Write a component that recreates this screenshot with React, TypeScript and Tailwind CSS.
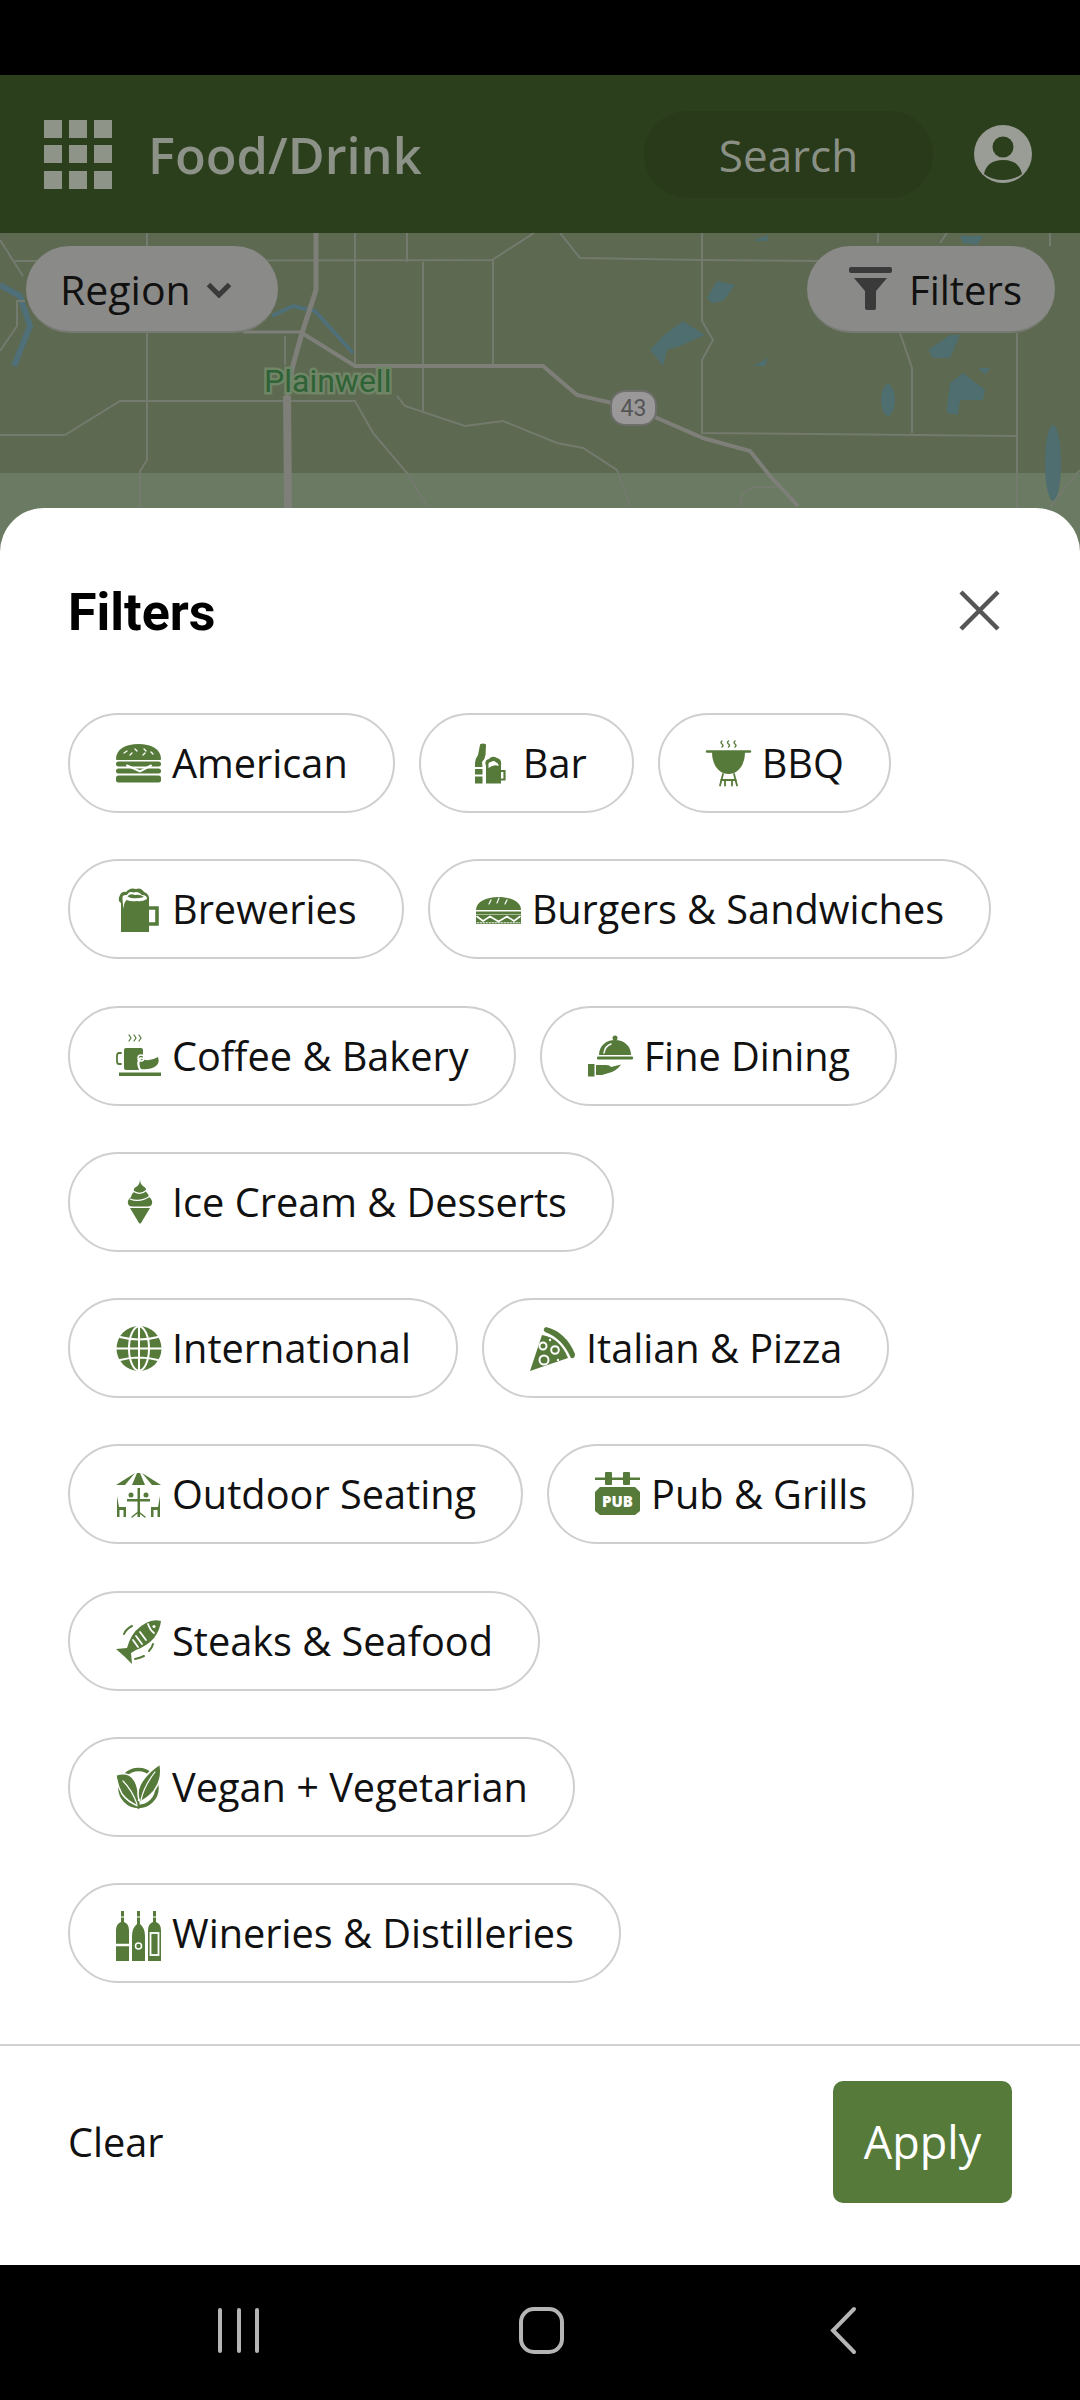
import type { ReactNode } from 'react'

const OPEN = "font-['Open_Sans',sans-serif]"

function Glyph({ children }: { children: ReactNode }) {
  return (
    <svg viewBox="0 0 45 45" className="h-[45px] w-[45px] shrink-0 overflow-visible fill-[#557a3a]">
      {children}
    </svg>
  )
}

const W = { stroke: '#fff', fill: 'none', strokeLinecap: 'round' as const }
const G = { stroke: '#557a3a', fill: 'none', strokeLinecap: 'round' as const }

const BurgerIcon = () => (
  <Glyph>
    <path d="M0 18C0 8 10 3 22.5 3S45 8 45 18Q45 19 44 19H1Q0 19 0 18Z" />
    <path d="M8 12l3-2M19 8l2 2M28 8l2 2M35 11l2 2M14 14l2-2M27 14l2-2" {...W} strokeWidth="1.3" />
    <rect y="20.5" width="45" height="5" rx="2.5" />
    <rect y="27.5" width="45" height="5" rx="2.5" />
    <path d="M11 24.5L24 30.5L35 24.5" {...W} strokeWidth="2" />
    <rect y="34.5" width="45" height="7" rx="2.5" />
  </Glyph>
)

const BarIcon = () => (
  <Glyph>
    <path d="M13 4Q13 2.5 16 2.5T19 4L18.5 14Q18 18 15 21L15.5 26H8V22Q8 18 11 14Z" />
    <rect x="8" y="28" width="7.5" height="5.5" />
    <rect x="8" y="35.5" width="7.5" height="7" />
    <path d="M19 25Q17 19 22 18Q25 14 30 17Q35 18 34 24V42.5H19Z" />
    <path d="M21.5 27V24Q21 21 24 21Q27 19 29 21.5Q31.5 22 31.5 24V25Q27 23 21.5 27Z" fill="#fff" />
    <path d="M34 30H37.5V38.5H34" {...G} strokeWidth="2.2" />
  </Glyph>
)

const GrillIcon = () => (
  <Glyph>
    <path d="M16 0q-2 1.5 0 3t0 3M22.5 0q-2 1.5 0 3t0 3M29 0q-2 1.5 0 3t0 3" {...G} strokeWidth="1.4" />
    <path d="M1 10.5H44" {...G} strokeWidth="2.4" />
    <path d="M6 11H39C39 24 32 33 22.5 33S6 24 6 11Z" />
    <path d="M17 33L14 44.5M28 33L31 44.5M15 39H30M19 39V44.5M26 39V44.5" {...G} strokeWidth="1.8" />
  </Glyph>
)

const MugIcon = () => (
  <Glyph>
    <path d="M5 45V16Q1 14 4 8Q6 4 10 5Q14 0 20 2Q25 0 28 5Q34 7 33 14V45Z" />
    <path d="M7.5 22Q8 14 11 13Q15 15 21 14Q26 15 31 12Q31 8 26 8Q22 4 18 5.5Q13 3.5 11 8Q6 7.5 6.5 11Q6.5 14 7.5 22Z" fill="#fff" />
    <path d="M11.5 9.5Q14 6 19 8Q24 7 28 10Q22 12 15 11Z" />
    <path d="M33 21H41V37H33" {...G} strokeWidth="3.6" />
  </Glyph>
)

const SubIcon = () => (
  <Glyph>
    <path d="M0 23C0 15 10 10 22.5 10S45 15 45 23Z" />
    <path d="M13 17l2-4M21 16l2-5M29 17l2-4" {...W} strokeWidth="1.2" />
    <rect y="24.5" width="45" height="3" />
    <path d="M0 28H45V37H0Z" />
    <path d="M1 29.5L7 34L14 29.5L22.5 34.5L31 29.5L38 34L44 29.5" {...W} strokeWidth="1.6" />
    <path d="M1 35.8H44" {...W} strokeWidth="1" strokeDasharray="1.5 1.5" />
  </Glyph>
)

const CoffeeIcon = () => (
  <Glyph>
    <path d="M13 2l2 3-2 3M18 2l2 3-2 3M23 2l2 3-2 3" {...G} strokeWidth="1.2" />
    <rect x="8" y="15" width="19" height="22" rx="2" />
    <path d="M5 20H3Q1 20 1 23V28Q1 31 3 31H5" {...G} strokeWidth="1.8" />
    <path d="M23 37Q19 29 24 24Q34 27 44 21Q47 29 42 34Q36 39 23 37Z" fill="#fff" />
    <path d="M25 36Q22 31 25 26Q34 29 42 24Q44 30 40 33Q34 37 25 36Z" />
    <circle cx="25" cy="25" r="3" fill="none" stroke="#fff" strokeWidth="1.5" />
    <rect x="3" y="39.5" width="42" height="3.5" />
  </Glyph>
)

const ClocheIcon = () => (
  <Glyph>
    <circle cx="27" cy="5" r="2.5" />
    <path d="M11 22C11 13 18 7 27 7S43 13 43 22Z" />
    <path d="M16 20Q17 13 23 11" {...W} strokeWidth="1.5" />
    <rect x="9" y="23.5" width="36" height="3" rx="1" />
    <rect y="31" width="6.5" height="12.5" />
    <path d="M8 32H18Q22 32 23 34L33 31.5Q30 36 24 39L14 42H8Z" />
  </Glyph>
)

const ConeIcon = () => (
  <Glyph>
    <path d="M24 0Q24 5 27 7Q31 9 30 13Q33 15 33 18Q37 21 36 25Q35 27.5 32 27.5H16Q13 27.5 12 25Q11 21 15 18Q15 15 18 13Q17 9 20 8Q24 6 24 0Z" />
    <path d="M17 12Q24 17 31 11M14 20Q24 24 34 17" {...W} strokeWidth="1.2" />
    <path d="M14 29H34L25 44Q24 45 23 44Z" />
  </Glyph>
)

const GlobeIcon = () => (
  <Glyph>
    <circle cx="23" cy="22.5" r="22.5" />
    <ellipse cx="23" cy="22.5" rx="10" ry="22" {...W} strokeWidth="2" />
    <path d="M23 0V45M0 22.5H45M4 11Q23 16 42 11M4 34Q23 29 42 34" {...W} strokeWidth="2" />
  </Glyph>
)

const PizzaIcon = () => (
  <Glyph>
    <path d="M0 45L12 9Q30 12 38 32Z" />
    <path d="M16 1Q36 6 45 28Q45 33 41 32Q32 12 15 6Q12 3 16 1Z" />
    <circle cx="25" cy="24" r="3.8" {...W} strokeWidth="2" />
    <circle cx="14" cy="34" r="4.5" {...W} strokeWidth="2" />
    <circle cx="13" cy="20" r="3.5" {...W} strokeWidth="2" />
    <circle cx="20" cy="14" r="1.2" fill="#fff" />
    <circle cx="28" cy="34" r="1.2" fill="#fff" />
  </Glyph>
)

const PatioIcon = () => (
  <Glyph>
    <path d="M19 1L9 13H0Z" />
    <path d="M21 1H24L29 13H16Z" />
    <path d="M26 1L36 13H45Z" />
    <rect x="21.5" y="16" width="2.5" height="29" />
    <rect x="11" y="27" width="23" height="2.5" />
    <path d="M16 45L22.5 40L29 45" {...G} strokeWidth="1.5" />
    <circle cx="15" cy="23" r="2.5" />
    <circle cx="30" cy="23" r="2.5" />
    <path d="M1 24L3 35H10V45H7.5V38H3.5V45H1Z" />
    <path d="M44 24L42 35H35V45H37.5V38H41.5V45H44Z" />
  </Glyph>
)

const PubIcon = () => (
  <Glyph>
    <rect y="5.5" width="45" height="2.5" />
    <rect x="10" width="7" height="13" rx="1" />
    <rect x="28" width="7" height="13" rx="1" />
    <path d="M5 15H40L45 20V39L40 43H5L0 39V20Z" />
    <text x="22.5" y="34.5" textAnchor="middle" fontFamily="Open Sans, sans-serif" fontWeight="800" fontSize="15" fill="#fff">PUB</text>
  </Glyph>
)

const FishIcon = () => (
  <Glyph>
    <path d="M45 3Q44 12 38 20Q31 28 20 32L15 35L16 46L9 39L0 31L11 30L13 24Q18 11 30 5Q37 1 45 3Z" />
    <circle cx="38" cy="8.5" r="1.5" fill="#fff" />
    <path d="M32 6Q34 12 38 15M24 14l6 8M20 18l6 8M17 22l5 7" {...W} strokeWidth="1.8" />
    <path d="M8 16Q10 11 16 8M37 26Q36 30 33 33M19 41Q24 40 28 38" {...G} strokeWidth="2" />
  </Glyph>
)

const LeafIcon = () => (
  <Glyph>
    <circle cx="22.5" cy="24" r="18.5" {...G} strokeWidth="3.5" />
    <path d="M0 11Q16 6 21 22Q24 32 22 42Q12 38 6 30Q1 21 0 11Z" stroke="#fff" strokeWidth="1.5" />
    <path d="M44 0Q47 15 38 27Q32 34 24 38Q20 30 24 21Q30 9 44 0Z" stroke="#fff" strokeWidth="1.5" />
    <path d="M7 17Q16 26 21 40M39 8Q28 22 25 36" {...W} strokeWidth="1.2" />
    <path d="M22.5 38V44" {...G} strokeWidth="2" />
  </Glyph>
)

const BottlesIcon = () => (
  <Glyph>
    <g transform="translate(0 -3)">
      <path d="M5 3H8V14Q13 16 13 22V53H0V22Q0 16 5 14Z" />
      <path d="M21 3H24V16Q29 20 29 28V53H16V28Q16 20 21 16Z" />
      <path d="M37 3H40V14Q45 16 45 22V53H32V22Q32 16 37 14Z" />
      <path d="M0 37H13" stroke="#fff" strokeWidth="2.5" />
      <circle cx="22.5" cy="38" r="3" fill="none" stroke="#fff" strokeWidth="1.5" />
      <rect x="34.5" y="25" width="8" height="22" fill="none" stroke="#fff" strokeWidth="1.8" />
      <path d="M4 9H9M20 9H25M36 9H41" stroke="#fff" strokeWidth="1" />
    </g>
  </Glyph>
)

const rows: { label: string; icon: ReactNode }[] = [
  { label: 'American', icon: <BurgerIcon /> },
  { label: 'Bar', icon: <BarIcon /> },
  { label: 'BBQ', icon: <GrillIcon /> },
  { label: 'Breweries', icon: <MugIcon /> },
  { label: 'Burgers & Sandwiches', icon: <SubIcon /> },
  { label: 'Coffee & Bakery', icon: <CoffeeIcon /> },
  { label: 'Fine Dining', icon: <ClocheIcon /> },
  { label: 'Ice Cream & Desserts', icon: <ConeIcon /> },
  { label: 'International', icon: <GlobeIcon /> },
  { label: 'Italian & Pizza', icon: <PizzaIcon /> },
  { label: 'Outdoor Seating', icon: <PatioIcon /> },
  { label: 'Pub & Grills', icon: <PubIcon /> },
  { label: 'Steaks & Seafood', icon: <FishIcon /> },
  { label: 'Vegan + Vegetarian', icon: <LeafIcon /> },
  { label: 'Wineries & Distilleries', icon: <BottlesIcon /> },
]

function MapLayer() {
  return (
    <svg viewBox="0 233 1080 330" className="absolute inset-0 h-full w-full">
      <rect x="0" y="233" width="1080" height="330" fill="#5d6950" />
      <rect x="0" y="473" width="1080" height="90" fill="#6b7a63" />
      <g fill="#4f6e70">
        <path d="M707 298L717 281L735 285L723 301L712 303Z" />
        <path d="M650 350L663 336L683 321L705 335L680 346L667 350L663 366Z" />
        <path d="M753 366L768 358L765 366Z" />
        <ellipse cx="888" cy="400" rx="7" ry="16" />
        <path d="M928 350L950 335L960 335L950 358L933 358Z" />
        <path d="M947 406L950 383L963 373L985 390L983 400L960 400L958 415L947 413Z" />
        <path d="M978 368L990 368L985 375Z" />
        <path d="M960 236L983 236L977 245L963 243Z" />
        <path d="M753 241L768 235L767 241Z" />
        <ellipse cx="1053" cy="463" rx="8" ry="38" />
      </g>
      <g fill="none" stroke="#4f7078">
        <path d="M0 285L20 296L30 326L14 366" strokeWidth="6" />
        <path d="M272 316L293 306L315 311L353 353" strokeWidth="4" />
      </g>
      <g fill="none" stroke="#747a6e" strokeWidth="2">
        <path d="M147 233V460L140 471V508M355 233V366M407 233V262M423 262V411M493 260V366" />
        <path d="M285 336V365M15 261L492 260L534 233M560 233L580 258L702 260L820 261" />
        <path d="M0 435H65L120 401H355L373 433L407 473L427 506" />
        <path d="M397 396L405 406L465 426L503 421L557 443L583 448L617 470L630 506" />
        <path d="M0 240L23 276M0 351L17 326V301H25" />
        <path d="M702 233V321L713 340L702 360V433L1017 436M1017 333V508" />
        <path d="M900 333L912 368V433M878 233V243M940 243L947 233" />
        <path d="M740 506L742 495L752 487H780M1050 508Q1062 490 1080 470M1050 233V246" />
      </g>
      <g fill="none" stroke="#7d7f78">
        <path d="M243 332H302" strokeWidth="3" />
        <path d="M316 233V290L302 333L293 365L287 396" strokeWidth="5" />
        <path d="M287 396L288 508" strokeWidth="8" />
        <path d="M302 333L355 366H543L577 395L634 408L703 438L750 451L770 476L798 506" strokeWidth="4" />
      </g>
      <text x="264" y="392" fontFamily="Roboto, sans-serif" fontSize="32" fill="#2f6236" stroke="#6f8566" strokeWidth="5" paintOrder="stroke">Plainwell</text>
      <rect x="611" y="391" width="45" height="34" rx="14" fill="#9a9899" stroke="#6e6e6a" strokeWidth="2" />
      <text x="633.5" y="416" textAnchor="middle" fontFamily="Roboto, sans-serif" fontSize="23" fill="#555">43</text>
    </svg>
  )
}

export default function App() {
  return (
    <div className={`flex h-[2400px] w-[1080px] flex-col overflow-hidden bg-black ${OPEN}`}>
      <div className="h-[75px] shrink-0 bg-black" />

      <header className="flex h-[158px] shrink-0 items-center bg-[#2b3f1c] pl-[44px] pr-[48px]">
        <div className="grid grid-cols-[repeat(3,18px)] gap-x-[7px] gap-y-[7.5px]">
          {Array.from({ length: 9 }).map((_, i) => (
            <div key={i} className="h-[18px] w-[18px] bg-[#8f9489]" />
          ))}
        </div>
        <h1 className="ml-[36px] pt-[2px] text-[50.5px] font-semibold leading-none text-[#8c9287]">Food/Drink</h1>
        <div className="ml-auto flex h-[87px] w-[289px] items-center justify-center rounded-full bg-[#293a1a] pt-[2px] text-[44px] text-[#8a9085]">
          Search
        </div>
        <svg viewBox="0 0 58 58" className="ml-[41px] h-[58px] w-[58px]">
          <circle cx="29" cy="29" r="29" fill="#9a9d96" />
          <circle cx="29" cy="22" r="10.5" fill="#2b3f1c" />
          <path d="M10 49Q13 35 29 35T48 49Q40 55 29 55T10 49Z" fill="#2b3f1c" />
        </svg>
      </header>

      <div className="relative h-[330px] shrink-0">
        <MapLayer />
        <div className="relative flex items-start justify-between pl-[26px] pr-[25px] pt-[13px]">
          <div className="flex h-[87px] w-[252px] items-center rounded-full border-b-2 border-[#777a72] bg-[#8a8a88] pl-[34px] pt-[3px] text-[41px] text-[#111]">
            Region
            <svg viewBox="0 0 26 16" className="ml-[15px] h-[16px] w-[26px]">
              <path d="M2.5 2.5L13 13L23.5 2.5" fill="none" stroke="#3a3a3a" strokeWidth="5" />
            </svg>
          </div>
          <div className="flex h-[87px] w-[248px] items-center rounded-full border-b-2 border-[#777a72] bg-[#8a8a88] pl-[42px] text-[40px] text-[#111]">
            <svg viewBox="0 0 43 43" className="mr-[17px] h-[43px] w-[43px]">
              <rect x="0" y="0" width="43" height="6" rx="2" fill="#3a3a3a" />
              <path d="M5 11H38L27 24V41Q27 43 25 43H18Q16 43 16 41V24Z" fill="#3a3a3a" />
            </svg>
            <span className="pt-[3px]">Filters</span>
          </div>
        </div>
      </div>

      <main className="relative -mt-[55px] flex min-h-0 flex-1 flex-col rounded-t-[44px] bg-white text-[#111]">
        <div className="mt-[53px] flex h-[100px] items-center justify-between pl-[68px] pr-[80px]">
          <h2 className="pt-[3px] font-['Roboto',sans-serif] text-[52px] font-bold leading-none text-black">Filters</h2>
          <svg viewBox="0 0 41 41" className="-mt-[2px] h-[41px] w-[41px]">
            <path d="M2 2L39 39M39 2L2 39" fill="none" stroke="#555" strokeWidth="4.5" />
          </svg>
        </div>

        <div className="mt-[52px] flex flex-1 flex-wrap content-start gap-x-[24px] gap-y-[46.25px] pl-[68px] pr-[69px]">
          {rows.map(r => (
            <button
              key={r.label}
              className="flex h-[100px] items-center gap-[11px] rounded-full border-2 border-[#cfcfcf] bg-white pl-[46px] pr-[45px] text-[39.7px] leading-none"
            >
              {r.icon}
              <span className="pt-[2px]">{r.label}</span>
            </button>
          ))}
        </div>

        <footer className="flex h-[221px] shrink-0 items-start justify-between border-t-2 border-[#d0d0d0] pl-[68px] pr-[68px] pt-[35px]">
          <button className="flex h-[122px] items-center pt-[2px] text-[39.7px]">Clear</button>
          <button className="flex h-[122px] w-[179px] items-center justify-center rounded-[10px] bg-[#557a3a] text-[45px] text-white">
            Apply
          </button>
        </footer>
      </main>

      <nav className="h-[135px] shrink-0 bg-black">
        <svg viewBox="0 0 1080 135" className="h-[135px] w-[1080px]">
          <g fill="none" stroke="#b5b5b5" strokeWidth="4" strokeLinecap="round">
            <path d="M220 45V86M239 45V86M257 45V86" />
            <rect x="521" y="44" width="41" height="43" rx="13" />
            <path d="M854 44L833 65.5L854 87" />
          </g>
        </svg>
      </nav>
    </div>
  )
}
